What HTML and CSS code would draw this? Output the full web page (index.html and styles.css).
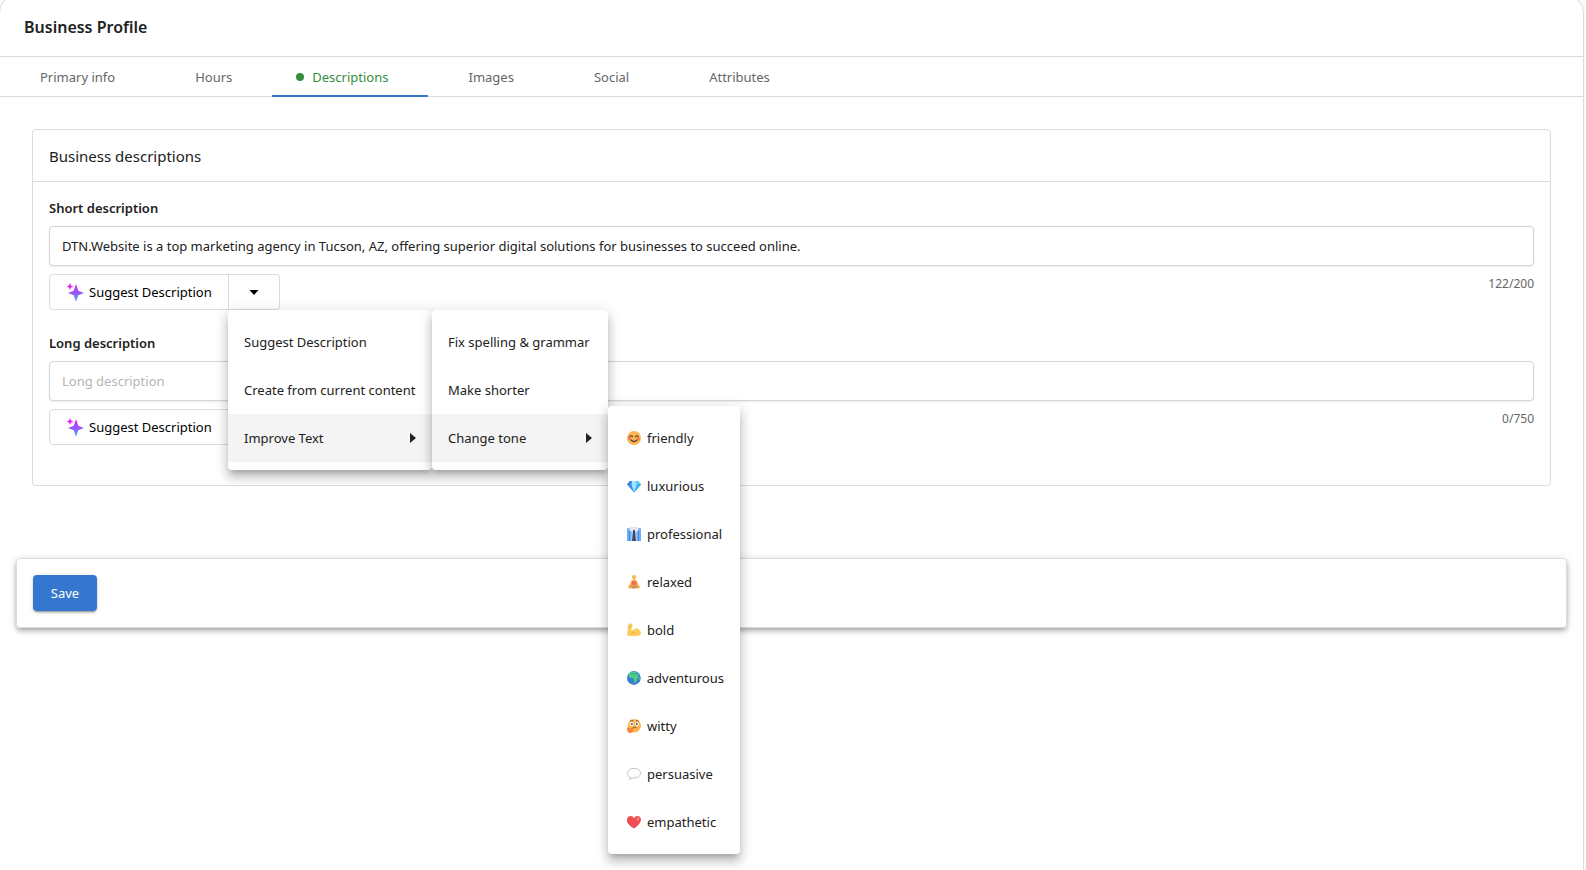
FILE: index.html
```html
<!DOCTYPE html>
<html lang="en">
<head>
    <meta charset="UTF-8">
    <meta name="viewport" content="width=device-width, initial-scale=1.0">
    <title>Business Profile</title>
    <link rel="stylesheet" href="styles.css">
</head>
<body>
    <!-- shared shapes -->
    <svg class="defs" width="0" height="0" aria-hidden="true">
        <defs>
            <linearGradient id="sparkGradient" x1="0" y1="0" x2="0" y2="1">
                <stop offset="0" stop-color="#e81cff"/>
                <stop offset="0.5" stop-color="#9a55f7"/>
                <stop offset="1" stop-color="#40c0ff"/>
            </linearGradient>
            <symbol id="sparkle" viewBox="0 0 18 20">
                <path fill="url(#sparkGradient)" d="M10 2L12.300 8.700L18 11L12.300 13.300L10 20L7.700 13.300L2 11L7.700 8.700Z"/>
                <path fill="#e81cff" d="M4 1L5 3.500L7.500 4.500L5 5.500L4 8L3 5.500L.5 4.500L3 3.500Z"/>
            </symbol>
        </defs>
    </svg>

    <div class="panel">
        <header class="header">
            <h1>Business Profile</h1>
        </header>

        <nav class="tabs">
            <a href="#primary" class="tab">Primary info</a>
            <a href="#hours" class="tab">Hours</a>
            <a href="#descriptions" class="tab active"><span class="dot"></span>Descriptions</a>
            <a href="#images" class="tab">Images</a>
            <a href="#social" class="tab">Social</a>
            <a href="#attributes" class="tab">Attributes</a>
        </nav>

        <form id="profileForm">
            <section class="card">
                <h2>Business descriptions</h2>
                <div class="card-body">
                    <div class="form-group">
                        <label for="shortDescription">Short description</label>
                        <input type="text" id="shortDescription" value="DTN.Website is a top marketing agency in Tucson, AZ, offering superior digital solutions for businesses to succeed online.">
                        <div class="field-footer">
                            <div class="split-button">
                                <button type="button" class="suggest">
                                    <svg class="sparkle"><use href="#sparkle"/></svg>Suggest Description
                                </button>
                                <button type="button" class="toggle" aria-label="More options" aria-expanded="true">
                                    <svg width="10" height="5" viewBox="0 0 10 5"><path d="M0.500 0H9.500L5 5Z"/></svg>
                                </button>
                                <ul class="menu main-menu">
                                    <li><button type="button">Suggest Description</button></li>
                                    <li><button type="button">Create from current content</button></li>
                                    <li>
                                        <button type="button" class="open">Improve Text
                                            <svg width="6" height="10" viewBox="0 0 6 10"><path d="M0 0L6 5L0 10Z"/></svg>
                                        </button>
                                        <ul class="menu improve-menu">
                                            <li><button type="button">Fix spelling &amp; grammar</button></li>
                                            <li><button type="button">Make shorter</button></li>
                                            <li class="anchor">
                                                <button type="button" class="open">Change tone
                                                    <svg width="6" height="10" viewBox="0 0 6 10"><path d="M0 0L6 5L0 10Z"/></svg>
                                                </button>
                                                <ul class="menu tone-menu">
                                                    <li><button type="button">
                                                        <svg class="emoji" viewBox="0 0 14 14"><circle cx="7" cy="7" r="7" fill="#fbb653"/><circle cx="2.600" cy="7.800" r="1.800" fill="#f8835a"/><circle cx="11.400" cy="7.800" r="1.800" fill="#f8835a"/><path d="M2.800 5.800Q4.200 3.600 5.600 5.800M8.400 5.800Q9.800 3.600 11.200 5.800M4 9Q7 12.200 10 9" fill="none" stroke="#523c35" stroke-width="1.100" stroke-linecap="round"/></svg>friendly
                                                    </button></li>
                                                    <li><button type="button">
                                                        <svg class="emoji" viewBox="0 0 14 14"><path d="M3 2H11L14 5.500L7 13.500L0 5.500Z" fill="#3f8be8"/><path d="M3 2L0 5.500H4.500L5 2Z" fill="#4179d9"/><path d="M5 2H9L10 5.500L7 13.500L4.500 5.500Z" fill="#a6e5ff"/><path d="M9 2H11L14 5.500H10Z" fill="#57cdf7"/><path d="M10 5.500H14L7 13.500Z" fill="#35b2ee"/></svg>luxurious
                                                    </button></li>
                                                    <li><button type="button">
                                                        <svg class="emoji" viewBox="0 0 14 14"><path d="M0 2Q0 1 1 1H13Q14 1 14 2V14H0Z" fill="#6caff5"/><path d="M2.500 3V14M11.500 3V14" stroke="#4689dc" stroke-width="1"/><path d="M4.500 3H9.500L10 14H4Z" fill="#a8cdf2"/><path d="M3 0H11L12 3L9 5L7 3L5 5L2 3Z" fill="#e7e6ef"/><path d="M6.200 3H7.800L8 5L9 14H5L6 5Z" fill="#454665"/></svg>professional
                                                    </button></li>
                                                    <li><button type="button">
                                                        <svg class="emoji" viewBox="0 0 14 14"><circle cx="7" cy="2" r="2" fill="#f9b843"/><path d="M6 3H8V5L10 6L11.500 10L13 12Q13 13.500 11 13.500H3Q1 13.500 1 12L2.500 10L4 6L6 5Z" fill="#fbb84b"/><path d="M5 5.500L7 6.500L9 5.500L9.500 10H4.500Z" fill="#ef6950"/><path d="M3 10.500Q7 8.500 11 10.500L12 12.500L7 12L2 12.500Z" fill="#e79647"/><path d="M5 12.500H9" stroke="#9790a5" stroke-width="1.500"/></svg>relaxed
                                                    </button></li>
                                                    <li><button type="button">
                                                        <svg class="emoji" viewBox="0 0 14 14"><path d="M2 .8Q4.500 0 5.500 1.500Q6 3.500 4.500 4.500L4.200 6.500Q5.500 8 7 6.500Q9.500 4.500 12 6.500Q14 8 14 10.500Q13 13 9 13H2Q0 13 0 11L1 4.500Q0 2 2 .8Z" fill="#fdcb5b"/><path d="M2 3.500L4.500 4.500M4.500 11Q5 9 6.500 9L8 10.500" fill="none" stroke="#e3a23d" stroke-width=".7"/></svg>bold
                                                    </button></li>
                                                    <li><button type="button">
                                                        <svg class="emoji" viewBox="0 0 14 14"><circle cx="7" cy="7" r="7" fill="#397fcf"/><path d="M2 2.500Q6-.5 10 .8L9 3L12.500 3.500L11.500 5L10 9.500L8 12.500L7 9.500L6.500 7H3.500L2 5.500Z" fill="#4bce85"/><path d="M12.500 5.500L14 7L12 9.500Z" fill="#4bce85"/><path d="M4 3L7 2.500L8.500 4" fill="none" stroke="#2a9d98" stroke-width=".8"/></svg>adventurous
                                                    </button></li>
                                                    <li><button type="button">
                                                        <svg class="emoji" viewBox="0 0 14 14"><circle cx="7.300" cy="6.700" r="6.700" fill="#fcb651"/><circle cx="4.700" cy="5" r="2" fill="#fff"/><circle cx="10" cy="5" r="2" fill="#fff"/><circle cx="4.900" cy="5" r=".9" fill="#433744"/><circle cx="9.800" cy="5" r=".9" fill="#433744"/><path d="M3 2Q4.500 .8 6 1.800M9 2Q10.500 1 12 2.500M5.500 9Q7.500 7.500 9.500 9" fill="none" stroke="#543c36" stroke-width=".8"/><path d="M0 9Q1 7.500 2 9L6.500 8.800Q7.500 9.500 6.300 10L6 12.500Q5 14 2.500 14Q0 13.500 0 9Z" fill="#f78638"/></svg>witty
                                                    </button></li>
                                                    <li><button type="button">
                                                        <svg class="emoji" viewBox="0 0 14 14"><path d="M3.500 10.500Q.4 9 .4 6.500Q.8 1.500 7 1.400Q13.200 1.500 13.600 6Q13.200 10.800 7 11Q5.800 11 5 10.800Q4 12.300 2.200 12.300Q3.500 11.500 3.500 10.500Z" fill="#fff" stroke="#b8b8b8" stroke-width=".8"/></svg>persuasive
                                                    </button></li>
                                                    <li><button type="button">
                                                        <svg class="emoji" viewBox="0 0 14 14"><path d="M7 13.500Q0 9 0 4.500Q.3 1 3.700 1Q6 1 7 3.200Q8 1 10.500 1Q14 1.300 14 4.800Q13.500 9.500 7 13.500Z" fill="#f04d50"/><path d="M7 13.500Q0 9 0 4.500L3 9Z" fill="#dd3664"/><ellipse cx="11" cy="4" rx="1.200" ry="1.900" transform="rotate(25 11 4)" fill="#ff8476"/></svg>empathetic
                                                    </button></li>
                                                </ul>
                                            </li>
                                        </ul>
                                    </li>
                                </ul>
                            </div>
                            <span class="counter">122/200</span>
                        </div>
                    </div>

                    <div class="form-group">
                        <label for="longDescription">Long description</label>
                        <input type="text" id="longDescription" placeholder="Long description">
                        <div class="field-footer">
                            <div class="split-button">
                                <button type="button" class="suggest">
                                    <svg class="sparkle"><use href="#sparkle"/></svg>Suggest Description
                                </button>
                                <button type="button" class="toggle" aria-label="More options">
                                    <svg width="10" height="5" viewBox="0 0 10 5"><path d="M0.500 0H9.500L5 5Z"/></svg>
                                </button>
                            </div>
                            <span class="counter">0/750</span>
                        </div>
                    </div>
                </div>
            </section>

            <div class="save-bar">
                <button type="submit" class="save">Save</button>
            </div>
        </form>
    </div>
</body>
</html>
```

FILE: styles.css
```css
* {
    margin: 0;
    padding: 0;
    box-sizing: border-box;
}
body {
    background-color: #fafafa;
    color: #212121;
    font-family: "Segoe UI", "Noto Sans", "Open Sans", sans-serif;
    font-size: 13px;
    line-height: 20px;
    overflow: hidden;
}
button,
input {
    font: inherit;
    color: inherit;
}
button {
    border: none;
    background: none;
    cursor: pointer;
}
ul {
    list-style: none;
}
.defs {
    position: absolute;
}
.panel {
    min-height: calc(100vh + 24px);
    margin: -4px 2px 0 -1px;
    padding-top: 3px;
    background-color: white;
    border: 1px solid #dcdcdc;
    border-radius: 16px;
}
.header {
    display: flex;
    align-items: center;
    height: 57px;
    padding: 0 24px 2px;
    border-bottom: 1px solid #dcdcdc;
}
h1 {
    font-size: 16px;
    font-weight: 600;
    line-height: 24px;
}

/* Tabs */
.tabs {
    display: flex;
    height: 40px;
    border-bottom: 1px solid #dcdcdc;
}
.tab {
    display: flex;
    align-items: center;
    height: 40px;
    padding: 0 40px;
    color: #666;
    text-decoration: none;
}
.tab.active {
    padding-left: 24px;
    color: #388e3c;
    box-shadow: inset 0 -2px #3576cf;
}
.dot {
    width: 8px;
    height: 8px;
    margin-right: 8px;
    border-radius: 50%;
    background-color: #388e3c;
}

/* Descriptions card */
.card {
    margin: 32px 32px 72px;
    border: 1px solid #dcdcdc;
    border-radius: 4px;
}
h2 {
    padding: 14px 16px 13px;
    border-bottom: 1px solid #dcdcdc;
    font-size: 15px;
    font-weight: 400;
    line-height: 24px;
}
.card-body {
    padding: 16px 16px 17px;
}
.form-group {
    margin-bottom: 23px;
}
label {
    display: block;
    margin-bottom: 8px;
    font-weight: 600;
}
input[type="text"] {
    display: block;
    width: 100%;
    height: 40px;
    padding: 0 12px;
    border: 1px solid #d5d5d5;
    border-radius: 4px;
    background-color: white;
    box-shadow: 0 1px 2px rgba(0, 0, 0, 0.08);
}
input::placeholder {
    color: #b5b5b5;
}
.field-footer {
    display: flex;
    justify-content: space-between;
    margin-top: 8px;
}
.counter {
    color: #666;
    font-size: 12px;
}
.split-button {
    position: relative;
    display: flex;
    height: 36px;
    border: 1px solid #dcdcdc;
    border-radius: 4px;
    color: #000;
}
.suggest {
    display: flex;
    align-items: center;
    width: 178px;
    padding-left: 16px;
}
.sparkle {
    width: 18px;
    height: 20px;
    margin-right: 5px;
}
.toggle {
    width: 51px;
    border-left: 1px solid #dcdcdc;
}
.toggle svg {
    display: block;
    margin: 0 auto;
}

/* Menus */
.menu {
    position: absolute;
    z-index: 10;
    padding: 8px 0;
    background-color: white;
    border-radius: 4px;
    color: #212121;
    box-shadow: 0 5px 5px -3px rgba(0, 0, 0, 0.2),
        0 8px 10px 1px rgba(0, 0, 0, 0.14),
        0 3px 14px 2px rgba(0, 0, 0, 0.12);
}
.main-menu {
    top: 35px;
    left: 178px;
    width: 204px;
}
.improve-menu {
    top: 0;
    left: 100%;
    width: 176px;
}
.tone-menu {
    top: -8px;
    left: 100%;
    width: 132px;
}
.anchor {
    position: relative;
}
.menu button {
    display: flex;
    align-items: center;
    width: 100%;
    height: 48px;
    padding: 0 16px;
    white-space: nowrap;
}
.menu button.open {
    justify-content: space-between;
    background-color: #f4f4f4;
}
.open svg {
    fill: #212121;
}
.emoji {
    width: 14px;
    height: 14px;
    margin: 0 6px 0 3px;
}

/* Save bar */
.save-bar {
    margin: 0 16px;
    padding: 16px;
    border: 1px solid #dcdcdc;
    border-radius: 4px;
    box-shadow: 0 2px 4px -1px rgba(0, 0, 0, 0.2),
        0 4px 5px rgba(0, 0, 0, 0.14),
        0 1px 10px rgba(0, 0, 0, 0.12);
}
.save {
    display: block;
    width: 64px;
    height: 36px;
    border-radius: 4px;
    background-color: #3576cf;
    color: white;
    box-shadow: 0 3px 1px -2px rgba(0, 0, 0, 0.2),
        0 2px 2px rgba(0, 0, 0, 0.14),
        0 1px 5px rgba(0, 0, 0, 0.12);
}
```
